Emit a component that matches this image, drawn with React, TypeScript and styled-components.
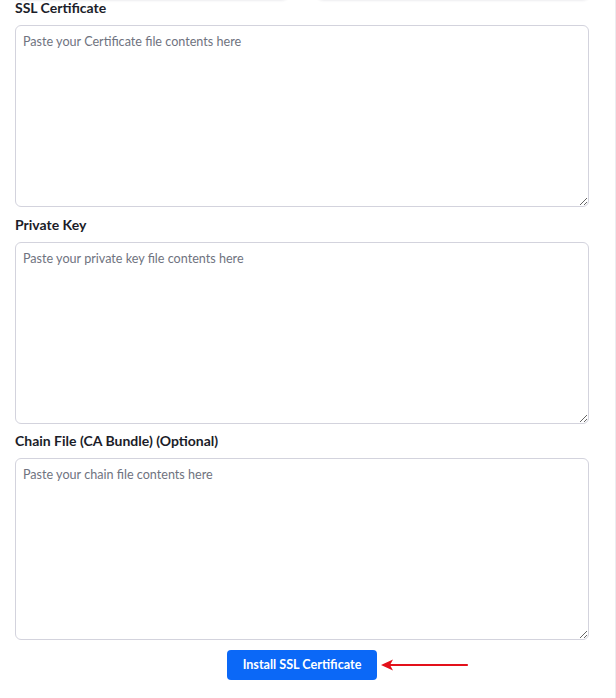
import * as React from 'react';
import styled, { createGlobalStyle } from 'styled-components';

const GlobalStyle = createGlobalStyle`
  html, body {
    margin: 0;
    padding: 0;
    background: #ffffff;
    font-family: Lato, "Noto Sans", sans-serif;
    color: #1b1d29;
  }
`;

const Page = styled.div`
  width: 616px;
  height: 698px;
  box-sizing: border-box;
  border-right: 1px solid #ececf0;
  overflow: hidden;
`;

const Form = styled.div`
  width: 574px;
  margin-left: 15px;
  display: flex;
  flex-direction: column;
`;

/* bottoms of the fields above, scrolled mostly out of view */
const PeekRow = styled.div`
  height: 0;
  display: flex;
  gap: 29px;
  align-items: flex-end;
`;

const PeekCard = styled.div`
  flex: 1;
  height: 30px;
  margin-bottom: 1px;
  border-radius: 6px;
  background: #fff;
  box-shadow: 0 1px 3px rgba(30, 30, 60, 0.16);
`;

const Field = styled.div`
  display: flex;
  flex-direction: column;
  margin-bottom: 9.5px;
`;

const Label = styled.label`
  font-size: 14px;
  line-height: 17px;
  font-weight: 700;
  margin-top: -1px;
  margin-bottom: 9px;
  color: #1b1d29;
`;

const Area = styled.textarea`
  height: 182px;
  box-sizing: border-box;
  border: 1px solid #d3d3dd;
  border-radius: 6px;
  padding: 8px 7px;
  font-family: Lato, "Noto Sans", sans-serif;
  font-size: 12.6px;
  line-height: 15px;
  color: #333;
  resize: vertical;
  outline: none;

  &::placeholder {
    color: #6f7380;
  }
`;

const Actions = styled.div`
  display: flex;
  justify-content: center;
`;

const ButtonWrap = styled.div`
  position: relative;
`;

const Button = styled.button`
  width: 150px;
  height: 30px;
  border: none;
  border-radius: 4px;
  background: #0b68f7;
  color: #fff;
  font-family: Lato, "Noto Sans", sans-serif;
  font-size: 12.6px;
  font-weight: 700;
  cursor: pointer;
`;

const Arrow = styled.svg`
  position: absolute;
  left: 154px;
  top: 8px;
`;

const fields = [
  { label: 'SSL Certificate', placeholder: 'Paste your Certificate file contents here' },
  { label: 'Private Key', placeholder: 'Paste your private key file contents here' },
  { label: 'Chain File (CA Bundle) (Optional)', placeholder: 'Paste your chain file contents here' },
];

export default function App() {
  return (
    <Page>
      <GlobalStyle />
      <Form>
        <PeekRow>
          <PeekCard />
          <PeekCard />
        </PeekRow>
        {fields.map((f) => (
          <Field key={f.label}>
            <Label>{f.label}</Label>
            <Area placeholder={f.placeholder} />
          </Field>
        ))}
        <Actions>
          <ButtonWrap>
            <Button>Install SSL Certificate</Button>
            <Arrow width="88" height="14" viewBox="0 0 88 14">
              <line x1="8" y1="7" x2="86" y2="7" stroke="#e3101a" strokeWidth="2.2" strokeLinecap="round" />
              <path d="M0 7 L12 1.5 L9 7 L12 12.5 Z" fill="#e3101a" />
            </Arrow>
          </ButtonWrap>
        </Actions>
      </Form>
    </Page>
  );
}
